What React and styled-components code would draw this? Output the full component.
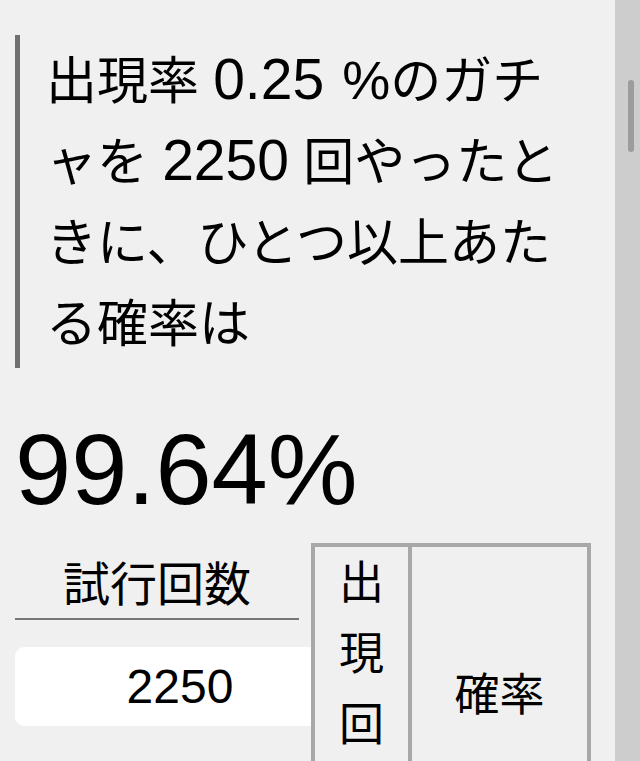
import React from 'react';
import styled, { createGlobalStyle } from 'styled-components';

const GlobalStyle = createGlobalStyle`
    html, body {
        margin: 0;
        padding: 0;
        height: 100%;
        overflow: hidden;
        background-color: #f0f0f0;
    }

    body {
        font-family: "Liberation Sans", "Noto Sans CJK JP", sans-serif;
        color: #000;
    }
`

const Page = styled.div`
    display: flex;
    height: 100vh;
`

const Main = styled.main`
    flex: 1;
    min-width: 0;
    padding: 35px 0 0 15px;
    overflow: hidden;
`

const Quote = styled.blockquote`
    margin: 0;
    padding: 6px 45px 3px 26px;
    border-left: 5px solid #707070;
    font-size: 51px;
    line-height: 81px;
    line-break: anywhere;
`

const Num = styled.span`
    font-size: 57px;
    line-height: 1;
`

const Unit = styled.span`
    margin-left: 4px;
    font-size: 54px;
    line-height: 1;
`

const Result = styled.div`
    margin-top: 51px;
    font-size: 101px;
    line-height: 1;
`

const Row = styled.div`
    display: flex;
    align-items: flex-start;
    margin-top: 23px;
`

const Field = styled.div`
    width: 284px;
    flex-shrink: 0;
`

const Label = styled.div`
    padding-top: 9px;
    font-size: 47px;
    line-height: 66px;
    text-align: center;
    border-bottom: 2px solid #777;
`

const Input = styled.input`
    display: block;
    box-sizing: border-box;
    width: 330px;
    height: 79px;
    margin-top: 27px;
    border: none;
    border-radius: 9px;
    background-color: #fff;
    font-family: "Liberation Sans", sans-serif;
    font-size: 48px;
    color: #000;
    text-align: center;
    outline: none;
`

const Table = styled.div`
    position: relative;
    z-index: 1;
    flex-shrink: 0;
    margin-left: 12px;
    display: grid;
    grid-template-columns: 93px 179px;
    border: 4px solid #a8a8a8;
    background-color: #f0f0f0;
`

const HeadCell = styled.div`
    display: flex;
    align-items: center;
    justify-content: center;
    padding: ${p => p.narrow ? '1px 24px 11px' : '4px'};
    font-size: 45px;
    line-height: 71px;
    text-align: center;
    border-left: ${p => p.narrow ? 'none' : '4px solid #a8a8a8'};
`

const Track = styled.div`
    width: 25px;
    flex-shrink: 0;
    background-color: #cdcdcd;
`

const Thumb = styled.div`
    width: 6px;
    height: 72px;
    margin: 80px 0 0 13px;
    border-radius: 3px;
    background-color: #9c9c9c;
`

export default function App() {
    const rate = '0.25';
    const count = '2250';

    return (
        <Page>
            <GlobalStyle />
            <Main>
                <Quote>
                    出現率 <Num>{rate}</Num> <Unit>%</Unit>のガチャを <Num>{count}</Num> 回やったときに、ひとつ以上あたる確率は
                </Quote>
                <Result>99.64%</Result>
                <Row>
                    <Field>
                        <Label>試行回数</Label>
                        <Input type="text" defaultValue={count} />
                    </Field>
                    <Table>
                        <HeadCell narrow>出現回数</HeadCell>
                        <HeadCell>確率</HeadCell>
                    </Table>
                </Row>
            </Main>
            <Track>
                <Thumb />
            </Track>
        </Page>
    );
}
